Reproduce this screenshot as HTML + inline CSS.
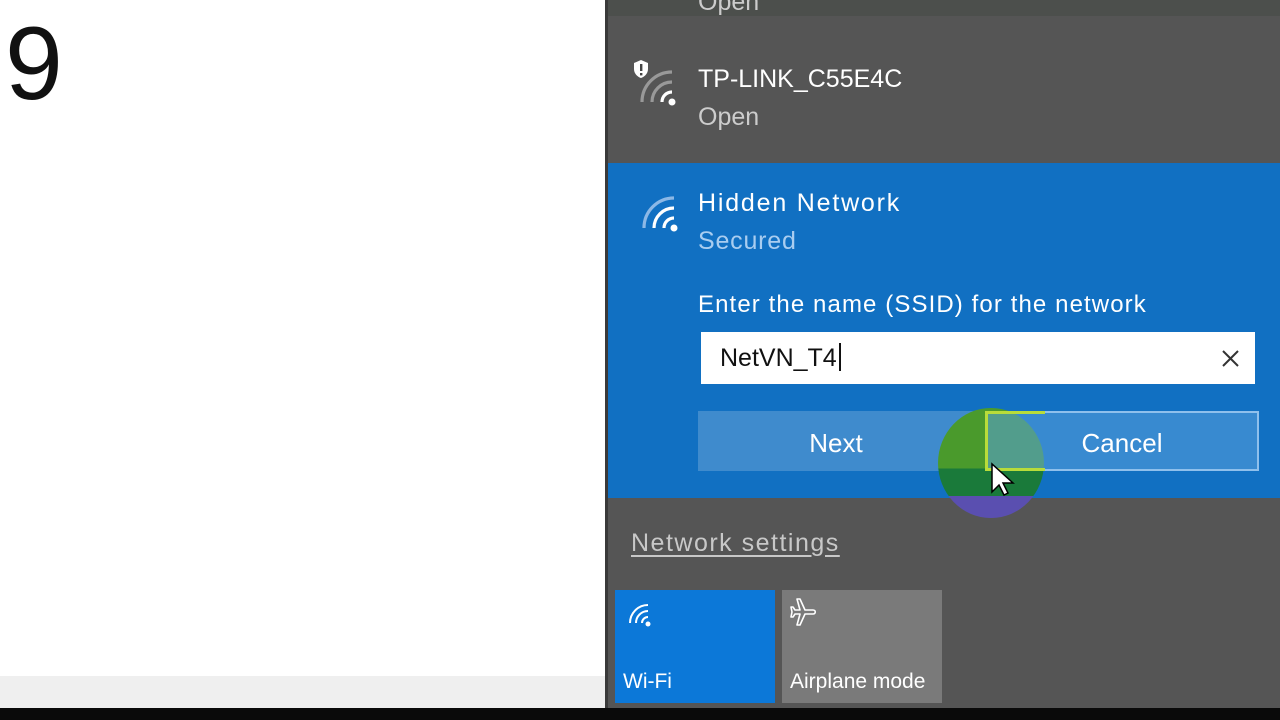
<!DOCTYPE html>
<html><head><meta charset="utf-8"><style>
*{margin:0;padding:0;box-sizing:border-box}
body{width:1280px;height:720px;position:relative;overflow:hidden;background:#fff;font-family:"Liberation Sans",sans-serif}
.a{position:absolute;white-space:nowrap}
</style></head><body>
<div class="a" style="left:5px;top:12px;font-size:104px;color:#111;line-height:1">9</div>
<div class="a" style="left:0;top:676px;width:607px;height:32px;background:#efefef"></div>
<div class="a" style="left:0;top:708px;width:1280px;height:12px;background:#0a0a0a"></div>
<div class="a" style="left:605px;top:0;width:675px;height:708px;background:#555"></div>
<div class="a" style="left:605px;top:0;width:3px;height:708px;background:#3a3a3a"></div>
<div class="a" style="left:608px;top:0;width:672px;height:16px;background:#4c4f4c"></div>
<div class="a" style="left:698px;top:-12px;font-size:25px;color:#ccc">Open</div>
<svg class="a" style="left:628px;top:58px" width="52" height="52" viewBox="0 0 52 52">
<path d="M13 2 l7 3 v6 c0 5-4 8-7 9 c-3-1-7-4-7-9 v-6z" fill="#fff"/><rect x="12" y="6" width="2.4" height="7" fill="#444"/><rect x="12" y="15" width="2.4" height="2.4" fill="#444"/>
<g fill="none" stroke-width="3.2"><path d="M44 14 A30 30 0 0 0 14 44" stroke="#999"/><path d="M44 24 A20 20 0 0 0 24 44" stroke="#999"/><path d="M44 34 A10 10 0 0 0 34 44" stroke="#fff"/></g><circle cx="44" cy="44" r="3.5" fill="#fff"/></svg>
<div class="a" style="left:698px;top:65px;font-size:25px;color:#fff">TP-LINK_C55E4C</div>
<div class="a" style="left:698px;top:103px;font-size:25px;color:#ccc">Open</div>
<div class="a" style="left:608px;top:163px;width:672px;height:335px;background:#1170c2"></div>
<svg class="a" style="left:630px;top:190px" width="52" height="52" viewBox="0 0 52 52">
<g fill="none" stroke-width="3.2"><path d="M44 8 A30 30 0 0 0 14 38" stroke="#8cb8e6"/><path d="M44 18 A20 20 0 0 0 24 38" stroke="#fff"/><path d="M44 28 A10 10 0 0 0 34 38" stroke="#fff"/></g><circle cx="44" cy="38" r="3.5" fill="#fff"/></svg>
<div class="a" style="left:698px;top:189px;font-size:25px;color:#fff;letter-spacing:1.8px">Hidden Network</div>
<div class="a" style="left:698px;top:227px;font-size:25px;color:#a9cdf0;letter-spacing:0.8px">Secured</div>
<div class="a" style="left:698px;top:291px;font-size:24px;color:#fff;letter-spacing:1.1px">Enter the name (SSID) for the network</div>
<div class="a" style="left:701px;top:332px;width:554px;height:52px;background:#fff"></div>
<div class="a" style="left:720px;top:343px;font-size:25px;color:#111">NetVN_T4<span style="display:inline-block;width:2px;height:28px;background:#111;vertical-align:-5px;margin-left:2px"></span></div>
<svg class="a" style="left:1221px;top:349px" width="19" height="19" viewBox="0 0 19 19"><path d="M2 2 L17 17 M17 2 L2 17" stroke="#333" stroke-width="2"/></svg>
<div class="a" style="left:698px;top:411px;width:280px;height:60px;background:#3f8bcd"></div>
<div class="a" style="left:698px;top:428px;width:276px;text-align:center;font-size:26px;color:#fff">Next</div>
<div class="a" style="left:938px;top:408px;width:106px;height:110px;border-radius:50%;background:linear-gradient(#4a9a2c 0,#4a9a2c 55%,#1a7a3a 55%,#1a7a3a 80%,#5a4fb0 80%)"></div>
<div class="a" style="left:985px;top:411px;width:274px;height:60px;background:rgba(90,160,220,0.55);border:2px solid #8fc0ec"></div>
<div class="a" style="left:985px;top:428px;width:274px;text-align:center;font-size:26px;color:#fff">Cancel</div>
<div class="a" style="left:985px;top:411px;width:60px;height:60px;border:3px solid #b8dc3a;border-right:none"></div>
<svg class="a" style="left:990px;top:462px" width="26" height="36" viewBox="0 0 26 36"><path d="M2 2 v28 l7-7 l5 10 l4-2 l-5-10 h10z" fill="#fff" stroke="#000" stroke-width="1.5"/></svg>
<div class="a" style="left:631px;top:529px;font-size:25px;color:#c8c8c8;letter-spacing:1.5px;text-decoration:underline;text-underline-offset:4px">Network settings</div>
<div class="a" style="left:615px;top:590px;width:160px;height:113px;background:#0c78d8"></div>
<svg class="a" style="left:624px;top:603px" width="30" height="26" viewBox="0 0 30 26"><g fill="none" stroke="#fff" stroke-width="2"><path d="M24 2 A18 18 0 0 0 6 20"/><path d="M24 8 A12 12 0 0 0 12 20"/><path d="M24 14 A6 6 0 0 0 18 20"/></g><circle cx="24" cy="21" r="2.5" fill="#fff"/></svg>
<div class="a" style="left:623px;top:670px;font-size:21px;color:#fff">Wi-Fi</div>
<div class="a" style="left:782px;top:590px;width:160px;height:113px;background:#7a7a7a"></div>
<svg class="a" style="left:788px;top:597px" width="34" height="34" viewBox="0 0 34 34"><path d="M9 2 h3 l5 11 h8 c3 0 3 4 0 4 h-8 l-5 11 h-3 l3-11 h-5 l-2 3 h-2 l1-5 l-1-5 h2 l2 3 h5z" fill="none" stroke="#fff" stroke-width="1.6" stroke-linejoin="round"/></svg>
<div class="a" style="left:790px;top:670px;font-size:21px;color:#fff">Airplane mode</div>
</body></html>
